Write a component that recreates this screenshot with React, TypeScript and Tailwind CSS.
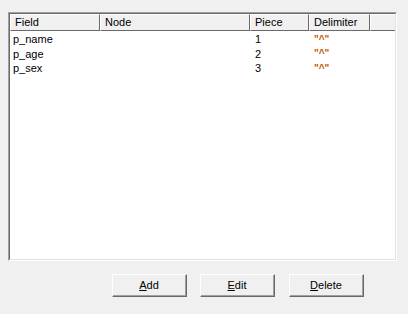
import React from 'react';

type Row = { field: string; node: string; piece: string; delim: string };

const rows: Row[] = [
  { field: 'p_name', node: '', piece: '1', delim: '"^"' },
  { field: 'p_age', node: '', piece: '2', delim: '"^"' },
  { field: 'p_sex', node: '', piece: '3', delim: '"^"' },
];

const cols = [
  { label: 'Field', w: 'w-[90px]' },
  { label: 'Node', w: 'w-[150px]' },
  { label: 'Piece', w: 'w-[59px]' },
  { label: 'Delimiter', w: 'w-[61px]' },
];

// bouton style Windows classique, lettre soulignée = raccourci
const Btn = ({ first, rest, className = '' }: { first: string; rest: string; className?: string }) => (
  <div className={`w-[75px] h-[23px] border-t border-l border-white border-r border-b border-r-[#696969] border-b-[#696969] ${className}`}>
    <div className="h-full flex items-center justify-center border-r border-b border-[#a0a0a0] bg-[#f0f0f0] text-black">
      <span><span className="underline">{first}</span>{rest}</span>
    </div>
  </div>
);

export default function App() {
  return (
    <div
      className="w-[408px] h-[314px] bg-[#f0f0f0] text-[11px] text-black overflow-hidden"
      style={{ fontFamily: '"Liberation Sans", Arial, sans-serif' }}
    >
      <div className="pt-[12px] pl-[8px]">
        {/* liste */}
        <div className="w-[389px] h-[249px] border-t border-l border-[#a0a0a0] border-r border-b border-r-white border-b-white">
          <div className="h-full flex flex-col bg-white border-t border-l border-[#696969] border-r border-b border-r-[#e3e3e3] border-b-[#e3e3e3]">
            {/* entête */}
            <div className="flex h-[17px] shrink-0">
              {cols.map((c) => (
                <div
                  key={c.label}
                  className={`${c.w} h-full bg-[#f0f0f0] border-t border-l border-white border-r border-b border-r-[#696969] border-b-[#696969] flex items-center pl-[4px]`}
                >
                  {c.label}
                </div>
              ))}
              <div className="flex-1 h-full bg-[#f0f0f0] border-t border-l border-white border-b border-b-[#696969]" />
            </div>
            {/* lignes */}
            <div className="pt-[1px]">
              {rows.map((r) => (
                <div key={r.field} className="flex h-[14.5px] items-center">
                  <div className="w-[90px] pl-[3px]">{r.field}</div>
                  <div className="w-[150px]">{r.node}</div>
                  <div className="w-[59px] pl-[5px]">{r.piece}</div>
                  <div className="w-[61px] pl-[5px] text-[#c05c00] font-bold text-[10px]">{r.delim}</div>
                </div>
              ))}
            </div>
          </div>
        </div>
      </div>

      {/* boutons */}
      <div className="flex pl-[112px] pt-[13px]">
        <Btn first="A" rest="dd" />
        <Btn first="E" rest="dit" className="ml-[13px]" />
        <Btn first="D" rest="elete" className="ml-[14px]" />
      </div>
    </div>
  );
}
